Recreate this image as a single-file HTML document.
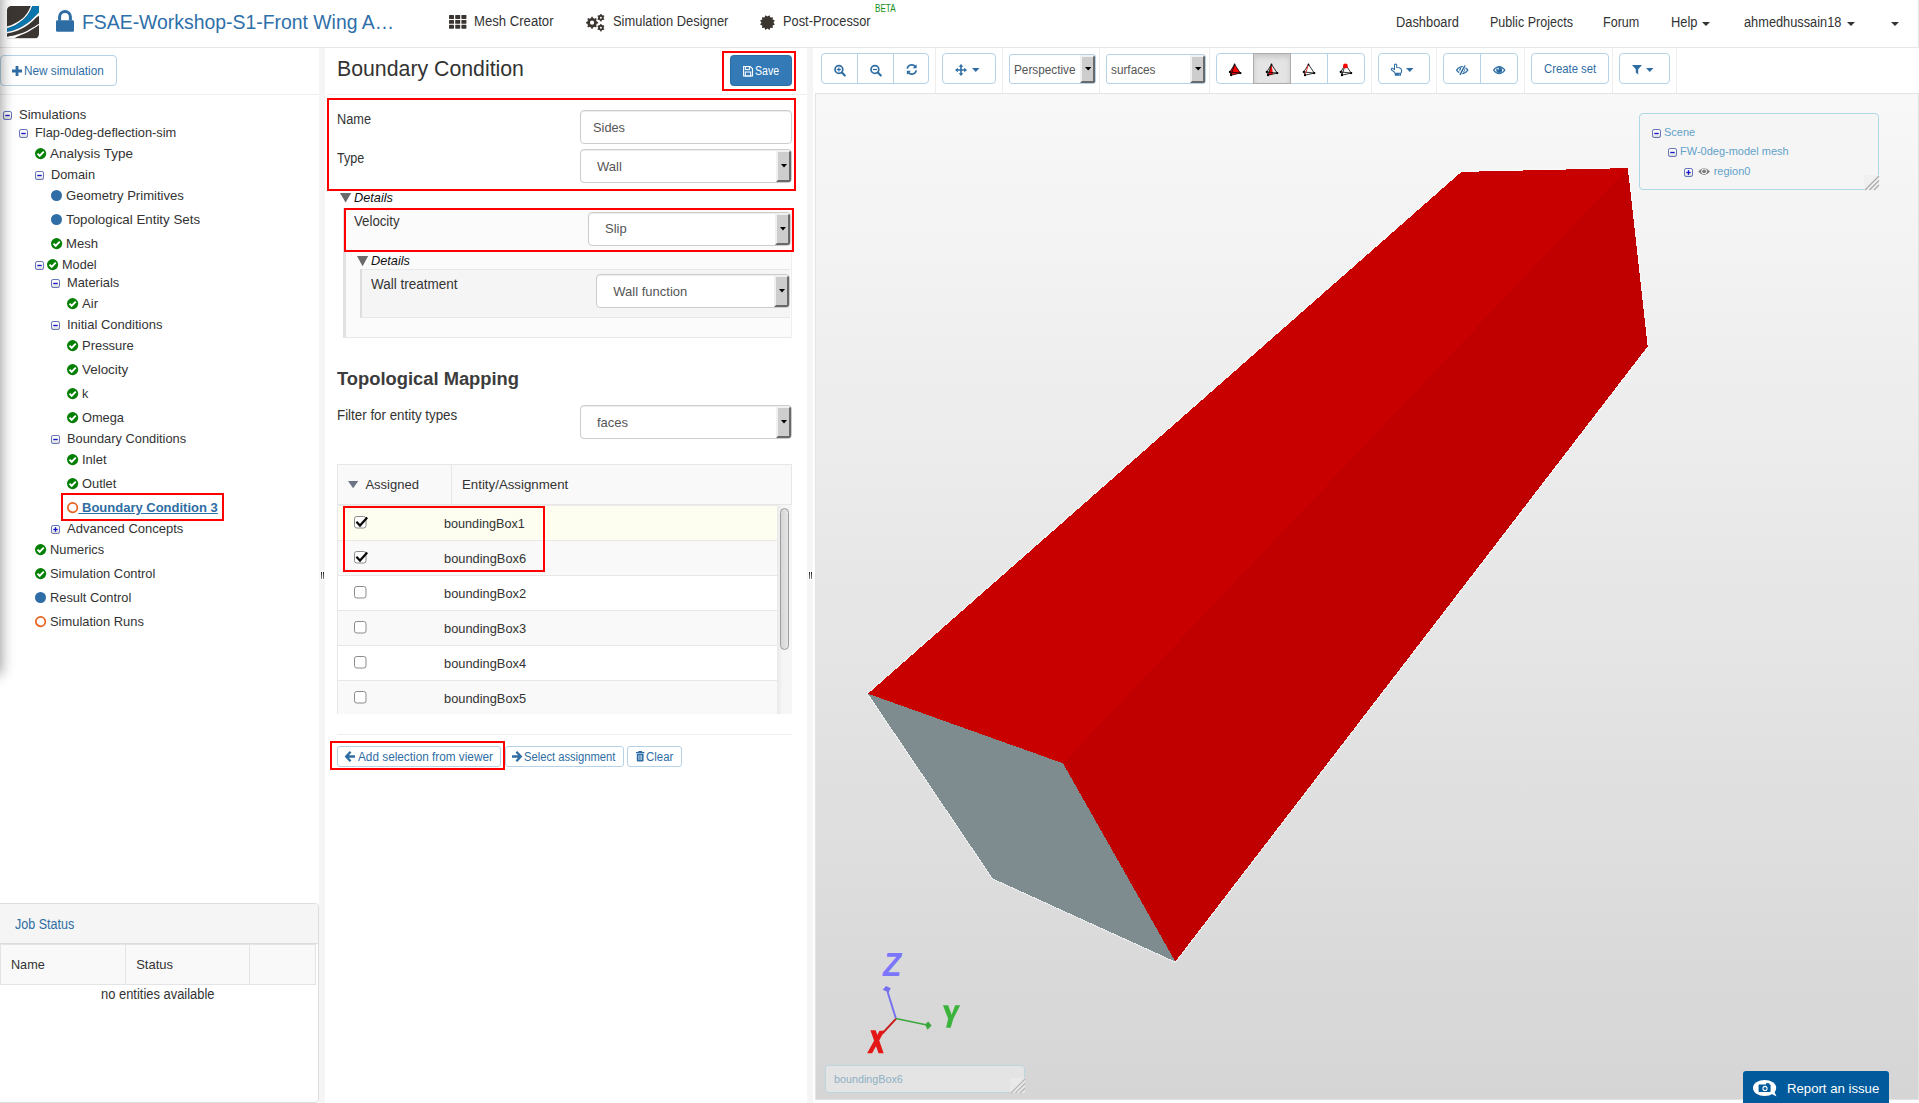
<!DOCTYPE html>
<html><head><meta charset="utf-8"><title>SimScale</title>
<style>
html,body{margin:0;padding:0;width:1919px;height:1103px;overflow:hidden;background:#fff;font-family:"Liberation Sans",sans-serif;}
.t{position:absolute;white-space:pre;transform-origin:0 50%;}
.a{position:absolute;box-sizing:border-box;}
svg{position:absolute;overflow:visible;}
</style></head><body>
<div class="a" style="left:0;top:0;width:1919px;height:48px;background:#fff;border-bottom:1px solid #e7e7e7;border-right:1px solid #e7e7e7;"></div>
<svg style="left:7px;top:5.7px" width="32" height="32.4" viewBox="0 0 32 32.4">
<defs><clipPath id="lg"><path d="M4.2,0 H32 V28.2 A4.2,4.2 0 0 1 27.8,32.4 H0 V4.2 A4.2,4.2 0 0 1 4.2,0 Z"/></clipPath></defs>
<g clip-path="url(#lg)">
<rect x="0" y="0" width="32" height="32.4" fill="#3b3632"/>
<path d="M0,20.3 C0.77,20.07 3.02,19.52 4.6,18.9 C6.18,18.28 7.87,17.53 9.5,16.6 C11.13,15.67 13.05,14.33 14.4,13.3 C15.75,12.27 16.52,11.60 17.6,10.4 C18.68,9.20 19.87,7.83 20.9,6.1 C21.93,4.37 23.32,1.02 23.8,0  L25.3,0 C25.00,0.70 24.23,2.80 23.5,4.2 C22.77,5.60 21.88,7.05 20.9,8.4 C19.92,9.75 18.68,11.18 17.6,12.3 C16.52,13.42 15.75,14.08 14.4,15.1 C13.05,16.12 11.13,17.45 9.5,18.4 C7.87,19.35 6.18,20.15 4.6,20.8 C3.02,21.45 0.77,22.05 0,22.3 Z" fill="#fff"/>
<path d="M0,22.3 C0.77,22.05 3.02,21.45 4.6,20.8 C6.18,20.15 7.87,19.35 9.5,18.4 C11.13,17.45 13.05,16.12 14.4,15.1 C15.75,14.08 16.52,13.42 17.6,12.3 C18.68,11.18 19.92,9.75 20.9,8.4 C21.88,7.05 22.77,5.60 23.5,4.2 C24.23,2.80 25.00,0.70 25.3,0 L32.1,0 L32.1,6.3 C31.58,6.85 30.32,8.27 29,9.6 C27.68,10.93 25.82,12.90 24.2,14.3 C22.58,15.70 20.93,16.88 19.3,18 C17.67,19.12 16.03,20.12 14.4,21 C12.77,21.88 11.13,22.65 9.5,23.3 C7.87,23.95 6.18,24.47 4.6,24.9 C3.02,25.33 0.77,25.73 0,25.9 Z" fill="#0b76ae"/>
<path d="M0,25.9 C0.77,25.73 3.02,25.33 4.6,24.9 C6.18,24.47 7.87,23.95 9.5,23.3 C11.13,22.65 12.77,21.88 14.4,21 C16.03,20.12 17.67,19.12 19.3,18 C20.93,16.88 22.58,15.70 24.2,14.3 C25.82,12.90 27.68,10.93 29,9.6 C30.32,8.27 31.58,6.85 32.1,6.3  L32.1,9.6 C31.58,9.95 30.32,10.58 29,11.7 C27.68,12.82 25.82,14.92 24.2,16.3 C22.58,17.68 20.93,18.92 19.3,20 C17.67,21.08 16.03,21.98 14.4,22.8 C12.77,23.62 11.13,24.30 9.5,24.9 C7.87,25.50 6.18,25.98 4.6,26.4 C3.02,26.82 0.77,27.23 0,27.4 Z" fill="#fff"/>
<path d="M0,30.8 C1.30,30.55 5.40,29.88 7.8,29.3 C10.20,28.72 12.22,28.12 14.4,27.3 C16.58,26.48 19.00,25.35 20.9,24.4 C22.80,23.45 23.93,22.73 25.8,21.6 C27.67,20.47 31.05,18.27 32.1,17.6 L32.1,18.9 C31.05,19.60 27.67,21.93 25.8,23.1 C23.93,24.27 22.80,24.95 20.9,25.9 C19.00,26.85 16.30,27.97 14.4,28.8 C12.50,29.63 10.75,30.30 9.5,30.9 C8.25,31.50 7.33,32.15 6.9,32.4 L0,32.4 Z" fill="#fff"/>
</g></svg>
<svg style="left:56px;top:10px" width="18" height="22" viewBox="0 0 18 22">
<path d="M3.6,10.5 V7 A5.4,5.4 0 0 1 14.4,7 V10.5" fill="none" stroke="#2e6ca4" stroke-width="3"/>
<rect x="0" y="10.2" width="18" height="11.6" rx="1.3" fill="#2e6ca4"/></svg>
<span class="t" style="left:81.80px;top:9px;font-size:20.8px;line-height:25px;color:#2e6fa9;transform:scaleX(0.9324);">FSAE-Workshop-S1-Front Wing A…</span>
<svg style="left:449px;top:15.3px" width="18" height="14" viewBox="0 0 18 14"><rect x="0.0" y="0.0" width="5" height="3.9" rx="0.6" fill="#3a3530"/><rect x="6.2" y="0.0" width="5" height="3.9" rx="0.6" fill="#3a3530"/><rect x="12.4" y="0.0" width="5" height="3.9" rx="0.6" fill="#3a3530"/><rect x="0.0" y="4.9" width="5" height="3.9" rx="0.6" fill="#3a3530"/><rect x="6.2" y="4.9" width="5" height="3.9" rx="0.6" fill="#3a3530"/><rect x="12.4" y="4.9" width="5" height="3.9" rx="0.6" fill="#3a3530"/><rect x="0.0" y="9.8" width="5" height="3.9" rx="0.6" fill="#3a3530"/><rect x="6.2" y="9.8" width="5" height="3.9" rx="0.6" fill="#3a3530"/><rect x="12.4" y="9.8" width="5" height="3.9" rx="0.6" fill="#3a3530"/></svg>
<svg style="left:0;top:0" width="1919" height="48"><path d="M591.17,17.88 L591.33,16.64 L592.77,16.64 L592.93,17.88 L594.84,18.67 L595.83,17.91 L596.84,18.92 L596.08,19.91 L596.87,21.82 L598.11,21.98 L598.11,23.42 L596.87,23.58 L596.08,25.49 L596.84,26.48 L595.83,27.49 L594.84,26.73 L592.93,27.52 L592.77,28.76 L591.33,28.76 L591.17,27.52 L589.26,26.73 L588.27,27.49 L587.26,26.48 L588.02,25.49 L587.23,23.58 L585.99,23.42 L585.99,21.98 L587.23,21.82 L588.02,19.91 L587.26,18.92 L588.27,17.91 L589.26,18.67 Z M589.95,22.70 A2.1,2.1 0 1 0 594.15,22.70 A2.1,2.1 0 1 0 589.95,22.70 Z" fill="#3a352f" fill-rule="evenodd"/><path d="M600.20,14.79 L600.31,13.90 L601.49,13.90 L601.60,14.79 L603.03,15.61 L603.85,15.26 L604.45,16.29 L603.73,16.83 L603.73,18.47 L604.45,19.01 L603.85,20.04 L603.03,19.69 L601.60,20.51 L601.49,21.40 L600.31,21.40 L600.20,20.51 L598.77,19.69 L597.95,20.04 L597.35,19.01 L598.07,18.47 L598.07,16.83 L597.35,16.29 L597.95,15.26 L598.77,15.61 Z M599.90,17.65 A1.0,1.0 0 1 0 601.90,17.65 A1.0,1.0 0 1 0 599.90,17.65 Z" fill="#3a352f" fill-rule="evenodd"/><path d="M600.20,24.79 L600.31,23.90 L601.49,23.90 L601.60,24.79 L603.03,25.61 L603.85,25.26 L604.45,26.29 L603.73,26.83 L603.73,28.47 L604.45,29.01 L603.85,30.04 L603.03,29.69 L601.60,30.51 L601.49,31.40 L600.31,31.40 L600.20,30.51 L598.77,29.69 L597.95,30.04 L597.35,29.01 L598.07,28.47 L598.07,26.83 L597.35,26.29 L597.95,25.26 L598.77,25.61 Z M599.90,27.65 A1.0,1.0 0 1 0 601.90,27.65 A1.0,1.0 0 1 0 599.90,27.65 Z" fill="#3a352f" fill-rule="evenodd"/></svg>
<svg style="left:0;top:0" width="1919" height="48"><polygon points="769.44,15.16 770.45,17.40 772.89,17.16 772.65,19.60 774.89,20.61 773.45,22.60 774.89,24.59 772.65,25.60 772.89,28.04 770.45,27.80 769.44,30.04 767.45,28.60 765.46,30.04 764.45,27.80 762.01,28.04 762.25,25.60 760.01,24.59 761.45,22.60 760.01,20.61 762.25,19.60 762.01,17.16 764.45,17.40 765.46,15.16 767.45,16.60" fill="#3a352f"/></svg>
<span class="t" style="left:474.30px;top:13px;font-size:14px;line-height:17px;color:#333;transform:scaleX(0.9374);">Mesh Creator</span>
<span class="t" style="left:612.60px;top:13px;font-size:14px;line-height:17px;color:#333;transform:scaleX(0.9211);">Simulation Designer</span>
<span class="t" style="left:783.20px;top:13px;font-size:14px;line-height:17px;color:#333;transform:scaleX(0.9153);">Post-Processor</span>
<span class="t" style="left:875.30px;top:3px;font-size:10.4px;line-height:12px;color:#159018;transform:scaleX(0.7842);">BETA</span>
<span class="t" style="left:1396.30px;top:14px;font-size:14px;line-height:17px;color:#333;transform:scaleX(0.9184);">Dashboard</span>
<span class="t" style="left:1489.50px;top:14px;font-size:14px;line-height:17px;color:#333;transform:scaleX(0.8964);">Public Projects</span>
<span class="t" style="left:1603.30px;top:14px;font-size:14px;line-height:17px;color:#333;transform:scaleX(0.8975);">Forum</span>
<span class="t" style="left:1670.50px;top:14px;font-size:14px;line-height:17px;color:#333;transform:scaleX(0.9202);">Help</span>
<span class="t" style="left:1744.00px;top:14px;font-size:14px;line-height:17px;color:#333;transform:scaleX(0.9134);">ahmedhussain18</span>
<svg style="left:1702px;top:21.6px" width="8" height="4" viewBox="0 0 8 4"><path d="M0,0 H8 L4.0,4 Z" fill="#333"/></svg>
<svg style="left:1847px;top:21.6px" width="8" height="4" viewBox="0 0 8 4"><path d="M0,0 H8 L4.0,4 Z" fill="#333"/></svg>
<svg style="left:1891px;top:21.6px" width="8" height="4" viewBox="0 0 8 4"><path d="M0,0 H8 L4.0,4 Z" fill="#333"/></svg>
<div class="a" style="left:319px;top:48px;width:6px;height:1055px;background:#f5f5f5;"></div>
<div class="a" style="left:807px;top:48px;width:6px;height:1055px;background:#f5f5f5;"></div>
<div class="a" style="left:320px;top:571px;width:5px;height:9px;background:#fcfcfc;"></div>
<div class="a" style="left:321px;top:572px;width:1px;height:7px;background:linear-gradient(180deg,#1c1c1c,#555 50%,#8a8a8a);"></div>
<div class="a" style="left:323px;top:572px;width:1px;height:7px;background:linear-gradient(180deg,#1c1c1c,#555 50%,#8a8a8a);"></div>
<div class="a" style="left:808px;top:571px;width:5px;height:9px;background:#fcfcfc;"></div>
<div class="a" style="left:809px;top:572px;width:1px;height:7px;background:linear-gradient(180deg,#1c1c1c,#555 50%,#8a8a8a);"></div>
<div class="a" style="left:811px;top:572px;width:1px;height:7px;background:linear-gradient(180deg,#1c1c1c,#555 50%,#8a8a8a);"></div>
<div class="a" style="left:0px;top:55px;width:117px;height:31px;border:1px solid #b5d2e6;border-radius:4px;background:#fff;"></div>
<svg style="left:12px;top:66.2px" width="10" height="10" viewBox="0 0 10 10"><path d="M3.6,0 H6.4 V3.6 H10 V6.4 H6.4 V10 H3.6 V6.4 H0 V3.6 H3.6 Z" fill="#2e6da4"/></svg>
<span class="t" style="left:23.60px;top:64px;font-size:12px;line-height:14px;color:#2e6da4;transform:scaleX(0.9808);">New simulation</span>
<div class="a" style="left:0;top:94px;width:319px;height:1px;background:#eee;"></div>
<svg style="left:3px;top:111px" width="9" height="9" viewBox="0 0 9 9"><defs><linearGradient id="tg3_111" x1="0" y1="0" x2="0" y2="1"><stop offset="0" stop-color="#fff"/><stop offset="0.5" stop-color="#f4f4f4"/><stop offset="1" stop-color="#d8d8d8"/></linearGradient></defs><rect x="0.5" y="0.5" width="8" height="8" rx="1.6" fill="url(#tg3_111)" stroke="#6474b8" stroke-width="1"/><path d="M2.3,4.5 H6.7" stroke="#1515c8" stroke-width="1.3"/></svg>
<span class="t" style="left:19.00px;top:107px;font-size:13px;line-height:16px;color:#333;">Simulations</span>
<svg style="left:19px;top:129px" width="9" height="9" viewBox="0 0 9 9"><defs><linearGradient id="tg19_129" x1="0" y1="0" x2="0" y2="1"><stop offset="0" stop-color="#fff"/><stop offset="0.5" stop-color="#f4f4f4"/><stop offset="1" stop-color="#d8d8d8"/></linearGradient></defs><rect x="0.5" y="0.5" width="8" height="8" rx="1.6" fill="url(#tg19_129)" stroke="#6474b8" stroke-width="1"/><path d="M2.3,4.5 H6.7" stroke="#1515c8" stroke-width="1.3"/></svg>
<span class="t" style="left:35.00px;top:125px;font-size:13px;line-height:16px;color:#333;transform:scaleX(0.9877);">Flap-0deg-deflection-sim</span>
<svg style="left:34.9px;top:147.9px" width="11.2" height="11.2" viewBox="0 0 11.2 11.2"><circle cx="5.6" cy="5.6" r="5.6" fill="#058005"/><path d="M2.5,5.6 L4.7,7.8 L8.8,3.7" fill="none" stroke="#fff" stroke-width="1.9"/></svg>
<span class="t" style="left:50.00px;top:146px;font-size:13px;line-height:16px;color:#333;transform:scaleX(1.0367);">Analysis Type</span>
<svg style="left:35px;top:171px" width="9" height="9" viewBox="0 0 9 9"><defs><linearGradient id="tg35_171" x1="0" y1="0" x2="0" y2="1"><stop offset="0" stop-color="#fff"/><stop offset="0.5" stop-color="#f4f4f4"/><stop offset="1" stop-color="#d8d8d8"/></linearGradient></defs><rect x="0.5" y="0.5" width="8" height="8" rx="1.6" fill="url(#tg35_171)" stroke="#6474b8" stroke-width="1"/><path d="M2.3,4.5 H6.7" stroke="#1515c8" stroke-width="1.3"/></svg>
<span class="t" style="left:51.00px;top:167px;font-size:13px;line-height:16px;color:#333;transform:scaleX(0.9822);">Domain</span>
<div class="a" style="left:50.9px;top:189.9px;width:11.2px;height:11.2px;border-radius:50%;background:#2f6da6;"></div>
<span class="t" style="left:66.00px;top:188px;font-size:13px;line-height:16px;color:#333;transform:scaleX(1.0075);">Geometry Primitives</span>
<div class="a" style="left:50.9px;top:213.9px;width:11.2px;height:11.2px;border-radius:50%;background:#2f6da6;"></div>
<span class="t" style="left:66.00px;top:212px;font-size:13px;line-height:16px;color:#333;transform:scaleX(1.0253);">Topological Entity Sets</span>
<svg style="left:50.9px;top:237.9px" width="11.2" height="11.2" viewBox="0 0 11.2 11.2"><circle cx="5.6" cy="5.6" r="5.6" fill="#058005"/><path d="M2.5,5.6 L4.7,7.8 L8.8,3.7" fill="none" stroke="#fff" stroke-width="1.9"/></svg>
<span class="t" style="left:66.00px;top:236px;font-size:13px;line-height:16px;color:#333;transform:scaleX(1.0068);">Mesh</span>
<svg style="left:35px;top:261px" width="9" height="9" viewBox="0 0 9 9"><defs><linearGradient id="tg35_261" x1="0" y1="0" x2="0" y2="1"><stop offset="0" stop-color="#fff"/><stop offset="0.5" stop-color="#f4f4f4"/><stop offset="1" stop-color="#d8d8d8"/></linearGradient></defs><rect x="0.5" y="0.5" width="8" height="8" rx="1.6" fill="url(#tg35_261)" stroke="#6474b8" stroke-width="1"/><path d="M2.3,4.5 H6.7" stroke="#1515c8" stroke-width="1.3"/></svg>
<svg style="left:46.9px;top:258.9px" width="11.2" height="11.2" viewBox="0 0 11.2 11.2"><circle cx="5.6" cy="5.6" r="5.6" fill="#058005"/><path d="M2.5,5.6 L4.7,7.8 L8.8,3.7" fill="none" stroke="#fff" stroke-width="1.9"/></svg>
<span class="t" style="left:62.00px;top:257px;font-size:13px;line-height:16px;color:#333;transform:scaleX(0.9771);">Model</span>
<svg style="left:51px;top:279px" width="9" height="9" viewBox="0 0 9 9"><defs><linearGradient id="tg51_279" x1="0" y1="0" x2="0" y2="1"><stop offset="0" stop-color="#fff"/><stop offset="0.5" stop-color="#f4f4f4"/><stop offset="1" stop-color="#d8d8d8"/></linearGradient></defs><rect x="0.5" y="0.5" width="8" height="8" rx="1.6" fill="url(#tg51_279)" stroke="#6474b8" stroke-width="1"/><path d="M2.3,4.5 H6.7" stroke="#1515c8" stroke-width="1.3"/></svg>
<span class="t" style="left:67.00px;top:275px;font-size:13px;line-height:16px;color:#333;transform:scaleX(0.9897);">Materials</span>
<svg style="left:66.9px;top:297.9px" width="11.2" height="11.2" viewBox="0 0 11.2 11.2"><circle cx="5.6" cy="5.6" r="5.6" fill="#058005"/><path d="M2.5,5.6 L4.7,7.8 L8.8,3.7" fill="none" stroke="#fff" stroke-width="1.9"/></svg>
<span class="t" style="left:82.00px;top:296px;font-size:13px;line-height:16px;color:#333;transform:scaleX(1.0072);">Air</span>
<svg style="left:51px;top:321px" width="9" height="9" viewBox="0 0 9 9"><defs><linearGradient id="tg51_321" x1="0" y1="0" x2="0" y2="1"><stop offset="0" stop-color="#fff"/><stop offset="0.5" stop-color="#f4f4f4"/><stop offset="1" stop-color="#d8d8d8"/></linearGradient></defs><rect x="0.5" y="0.5" width="8" height="8" rx="1.6" fill="url(#tg51_321)" stroke="#6474b8" stroke-width="1"/><path d="M2.3,4.5 H6.7" stroke="#1515c8" stroke-width="1.3"/></svg>
<span class="t" style="left:67.00px;top:317px;font-size:13px;line-height:16px;color:#333;">Initial Conditions</span>
<svg style="left:66.9px;top:339.9px" width="11.2" height="11.2" viewBox="0 0 11.2 11.2"><circle cx="5.6" cy="5.6" r="5.6" fill="#058005"/><path d="M2.5,5.6 L4.7,7.8 L8.8,3.7" fill="none" stroke="#fff" stroke-width="1.9"/></svg>
<span class="t" style="left:82.00px;top:338px;font-size:13px;line-height:16px;color:#333;transform:scaleX(0.9957);">Pressure</span>
<svg style="left:66.9px;top:363.9px" width="11.2" height="11.2" viewBox="0 0 11.2 11.2"><circle cx="5.6" cy="5.6" r="5.6" fill="#058005"/><path d="M2.5,5.6 L4.7,7.8 L8.8,3.7" fill="none" stroke="#fff" stroke-width="1.9"/></svg>
<span class="t" style="left:82.00px;top:362px;font-size:13px;line-height:16px;color:#333;transform:scaleX(1.0313);">Velocity</span>
<svg style="left:66.9px;top:387.9px" width="11.2" height="11.2" viewBox="0 0 11.2 11.2"><circle cx="5.6" cy="5.6" r="5.6" fill="#058005"/><path d="M2.5,5.6 L4.7,7.8 L8.8,3.7" fill="none" stroke="#fff" stroke-width="1.9"/></svg>
<span class="t" style="left:82.00px;top:386px;font-size:13px;line-height:16px;color:#333;transform:scaleX(0.9654);">k</span>
<svg style="left:66.9px;top:411.9px" width="11.2" height="11.2" viewBox="0 0 11.2 11.2"><circle cx="5.6" cy="5.6" r="5.6" fill="#058005"/><path d="M2.5,5.6 L4.7,7.8 L8.8,3.7" fill="none" stroke="#fff" stroke-width="1.9"/></svg>
<span class="t" style="left:82.00px;top:410px;font-size:13px;line-height:16px;color:#333;transform:scaleX(0.9826);">Omega</span>
<svg style="left:51px;top:435px" width="9" height="9" viewBox="0 0 9 9"><defs><linearGradient id="tg51_435" x1="0" y1="0" x2="0" y2="1"><stop offset="0" stop-color="#fff"/><stop offset="0.5" stop-color="#f4f4f4"/><stop offset="1" stop-color="#d8d8d8"/></linearGradient></defs><rect x="0.5" y="0.5" width="8" height="8" rx="1.6" fill="url(#tg51_435)" stroke="#6474b8" stroke-width="1"/><path d="M2.3,4.5 H6.7" stroke="#1515c8" stroke-width="1.3"/></svg>
<span class="t" style="left:67.00px;top:431px;font-size:13px;line-height:16px;color:#333;transform:scaleX(0.9868);">Boundary Conditions</span>
<svg style="left:66.9px;top:453.9px" width="11.2" height="11.2" viewBox="0 0 11.2 11.2"><circle cx="5.6" cy="5.6" r="5.6" fill="#058005"/><path d="M2.5,5.6 L4.7,7.8 L8.8,3.7" fill="none" stroke="#fff" stroke-width="1.9"/></svg>
<span class="t" style="left:82.00px;top:452px;font-size:13px;line-height:16px;color:#333;">Inlet</span>
<svg style="left:66.9px;top:477.9px" width="11.2" height="11.2" viewBox="0 0 11.2 11.2"><circle cx="5.6" cy="5.6" r="5.6" fill="#058005"/><path d="M2.5,5.6 L4.7,7.8 L8.8,3.7" fill="none" stroke="#fff" stroke-width="1.9"/></svg>
<span class="t" style="left:82.00px;top:476px;font-size:13px;line-height:16px;color:#333;transform:scaleX(0.9889);">Outlet</span>
<svg style="left:66.9px;top:501.9px" width="11.2" height="11.2" viewBox="0 0 11.2 11.2"><circle cx="5.6" cy="5.6" r="4.75" fill="#fff" stroke="#e8601c" stroke-width="1.7"/></svg>
<span class="t" style="left:78.40px;top:500px;font-size:13px;line-height:16px;color:#2e6da4;font-weight:700;text-decoration:underline;"> Boundary Condition 3</span>
<svg style="left:51px;top:525px" width="9" height="9" viewBox="0 0 9 9"><defs><linearGradient id="tg51_525" x1="0" y1="0" x2="0" y2="1"><stop offset="0" stop-color="#fff"/><stop offset="0.5" stop-color="#f4f4f4"/><stop offset="1" stop-color="#d8d8d8"/></linearGradient></defs><rect x="0.5" y="0.5" width="8" height="8" rx="1.6" fill="url(#tg51_525)" stroke="#6474b8" stroke-width="1"/><path d="M2.3,4.5 H6.7" stroke="#1515c8" stroke-width="1.3"/><path d="M4.5,2.2 V6.8" stroke="#1515c8" stroke-width="1.3"/></svg>
<span class="t" style="left:67.00px;top:521px;font-size:13px;line-height:16px;color:#333;">Advanced Concepts</span>
<svg style="left:34.9px;top:543.9px" width="11.2" height="11.2" viewBox="0 0 11.2 11.2"><circle cx="5.6" cy="5.6" r="5.6" fill="#058005"/><path d="M2.5,5.6 L4.7,7.8 L8.8,3.7" fill="none" stroke="#fff" stroke-width="1.9"/></svg>
<span class="t" style="left:50.00px;top:542px;font-size:13px;line-height:16px;color:#333;transform:scaleX(0.9854);">Numerics</span>
<svg style="left:34.9px;top:567.9px" width="11.2" height="11.2" viewBox="0 0 11.2 11.2"><circle cx="5.6" cy="5.6" r="5.6" fill="#058005"/><path d="M2.5,5.6 L4.7,7.8 L8.8,3.7" fill="none" stroke="#fff" stroke-width="1.9"/></svg>
<span class="t" style="left:50.00px;top:566px;font-size:13px;line-height:16px;color:#333;transform:scaleX(0.9924);">Simulation Control</span>
<div class="a" style="left:34.9px;top:591.9px;width:11.2px;height:11.2px;border-radius:50%;background:#2f6da6;"></div>
<span class="t" style="left:50.00px;top:590px;font-size:13px;line-height:16px;color:#333;transform:scaleX(0.9870);">Result Control</span>
<svg style="left:34.9px;top:615.9px" width="11.2" height="11.2" viewBox="0 0 11.2 11.2"><circle cx="5.6" cy="5.6" r="4.75" fill="#fff" stroke="#e8601c" stroke-width="1.7"/></svg>
<span class="t" style="left:50.00px;top:614px;font-size:13px;line-height:16px;color:#333;transform:scaleX(0.9920);">Simulation Runs</span>
<div class="a" style="left:61px;top:493px;width:163px;height:28px;border:2px solid #f00;"></div>
<div class="a" style="left:-40px;top:-40px;width:40px;height:713px;box-shadow:0 0 14px 1px rgba(0,0,0,0.42);z-index:50;"></div>
<div class="a" style="left:-4px;top:903px;width:323px;height:200px;border:1px solid #ddd;border-radius:4px;background:#fff;"></div>
<div class="a" style="left:-3px;top:904px;width:321px;height:40px;background:#f5f5f5;border-bottom:1px solid #ddd;border-radius:3px 3px 0 0;"></div>
<span class="t" style="left:15.40px;top:916px;font-size:14px;line-height:17px;color:#2e6da4;transform:scaleX(0.8949);">Job Status</span>
<div class="a" style="left:0;top:944px;width:316px;height:41px;background:#f9f9f9;border:1px solid #e4e4e4;"></div>
<div class="a" style="left:125px;top:944px;width:1px;height:41px;background:#e4e4e4;"></div>
<div class="a" style="left:249px;top:944px;width:1px;height:41px;background:#e4e4e4;"></div>
<span class="t" style="left:11.30px;top:957px;font-size:13px;line-height:16px;color:#333;transform:scaleX(0.9716);">Name</span>
<span class="t" style="left:136.20px;top:957px;font-size:13px;line-height:16px;color:#333;">Status</span>
<span class="t" style="left:101.20px;top:986px;font-size:14px;line-height:17px;color:#333;transform:scaleX(0.9229);">no entities available</span>
<span class="t" style="left:337.20px;top:56px;font-size:21.6px;line-height:26px;color:#333;transform:scaleX(0.9856);">Boundary Condition</span>
<div class="a" style="left:722px;top:51px;width:74px;height:40px;border:2px solid #f00;z-index:5;"></div>
<div class="a" style="left:730px;top:55px;width:62px;height:31px;background:#337ab7;border:1px solid #2e6da4;border-radius:3.5px;"></div>
<svg style="left:743px;top:65.5px" width="10" height="10.5" viewBox="0 0 10 10.5"><path d="M0.6,0.5 H7.2 L9.5,2.8 V10 H0.6 Z" fill="none" stroke="#fff" stroke-width="1.1"/><rect x="2.4" y="0.6" width="4" height="3" fill="none" stroke="#fff" stroke-width="1"/><rect x="2.3" y="6" width="5.4" height="4" fill="none" stroke="#fff" stroke-width="1"/></svg>
<span class="t" style="left:755.20px;top:64px;font-size:12px;line-height:14px;color:#fff;transform:scaleX(0.8812);">Save</span>
<div class="a" style="left:327px;top:94px;width:480px;height:1px;background:#eee;"></div>
<div class="a" style="left:327px;top:98px;width:469px;height:93px;border:2px solid #f00;z-index:5;"></div>
<span class="t" style="left:337.20px;top:111px;font-size:14px;line-height:17px;color:#333;transform:scaleX(0.9103);">Name</span>
<div class="a" style="left:580px;top:110px;width:212px;height:34px;border:1px solid #ccc;border-radius:4px;background:#fff;box-shadow:inset 0 1px 1px rgba(0,0,0,.075);"></div>
<span class="t" style="left:593.30px;top:120px;font-size:13px;line-height:16px;color:#555;transform:scaleX(0.9842);">Sides</span>
<span class="t" style="left:337.20px;top:150px;font-size:14px;line-height:17px;color:#333;transform:scaleX(0.8962);">Type</span>
<div class="a" style="left:580px;top:149px;width:212px;height:34px;border:1px solid #ccc;border-radius:4px;background:#fff;box-shadow:inset 0 1px 1px rgba(0,0,0,.075);overflow:hidden;"><div class="a" style="right:0;top:0;width:15px;height:32px;background:#cdcdcd;border-style:solid;border-width:2px;border-color:#f0f0f0 #696969 #696969 #f0f0f0;"></div></div><svg style="left:781.3px;top:164.1px" width="6" height="3.6" viewBox="0 0 6 3.6"><path d="M0,0 H6 L3,3.6 Z" fill="#000"/></svg><span class="t" style="left:597.00px;top:159px;font-size:13px;line-height:16px;color:#555;">Wall</span>
<svg style="left:339.8px;top:193.2px" width="11.2" height="9.6" viewBox="0 0 11.2 9.6"><path d="M0,0 H11.2 L5.6,9.6 Z" fill="#6a6a6a"/></svg>
<span class="t" style="left:354.00px;top:190px;font-size:13px;line-height:16px;color:#111;font-style:italic;transform:scaleX(0.9814);">Details</span>
<div class="a" style="left:343px;top:208px;width:449px;height:130px;background:#fbfbfb;border-left:3px solid #e2e2e2;border-bottom:1px solid #e8e8e8;border-right:1px solid #eee;"></div>
<div class="a" style="left:344px;top:208px;width:450px;height:44px;border:2px solid #f00;z-index:5;"></div>
<span class="t" style="left:353.90px;top:213px;font-size:14px;line-height:17px;color:#333;transform:scaleX(0.9452);">Velocity</span>
<div class="a" style="left:588px;top:212px;width:203px;height:34px;border:1px solid #ccc;border-radius:4px;background:#fff;box-shadow:inset 0 1px 1px rgba(0,0,0,.075);overflow:hidden;"><div class="a" style="right:0;top:0;width:15px;height:32px;background:#cdcdcd;border-style:solid;border-width:2px;border-color:#f0f0f0 #696969 #696969 #f0f0f0;"></div></div><svg style="left:780.3px;top:227.1px" width="6" height="3.6" viewBox="0 0 6 3.6"><path d="M0,0 H6 L3,3.6 Z" fill="#000"/></svg><span class="t" style="left:605.00px;top:221px;font-size:13px;line-height:16px;color:#555;">Slip</span>
<svg style="left:356.8px;top:256px" width="11.2" height="10.2" viewBox="0 0 11.2 10.2"><path d="M0,0 H11.2 L5.6,10.2 Z" fill="#6a6a6a"/></svg>
<span class="t" style="left:371.00px;top:253px;font-size:13px;line-height:16px;color:#111;font-style:italic;transform:scaleX(0.9814);">Details</span>
<div class="a" style="left:360px;top:269px;width:430px;height:49px;background:#f5f5f5;border-left:2px solid #ddd;border-top:1px solid #e8e8e8;border-bottom:1px solid #e8e8e8;"></div>
<span class="t" style="left:371.00px;top:276px;font-size:14px;line-height:17px;color:#333;transform:scaleX(0.9640);">Wall treatment</span>
<div class="a" style="left:596px;top:274px;width:193.5px;height:34px;border:1px solid #ccc;border-radius:4px;background:#fff;box-shadow:inset 0 1px 1px rgba(0,0,0,.075);overflow:hidden;"><div class="a" style="right:0;top:0;width:15px;height:32px;background:#cdcdcd;border-style:solid;border-width:2px;border-color:#f0f0f0 #696969 #696969 #f0f0f0;"></div></div><svg style="left:778.8px;top:289.1px" width="6" height="3.6" viewBox="0 0 6 3.6"><path d="M0,0 H6 L3,3.6 Z" fill="#000"/></svg><span class="t" style="left:613.30px;top:284px;font-size:13px;line-height:16px;color:#555;">Wall function</span>
<span class="t" style="left:336.80px;top:367px;font-size:18.8px;line-height:23px;color:#3c3c3c;font-weight:700;transform:scaleX(0.9765);">Topological Mapping</span>
<span class="t" style="left:337.30px;top:407px;font-size:14px;line-height:17px;color:#333;transform:scaleX(0.9537);">Filter for entity types</span>
<div class="a" style="left:580px;top:405px;width:211.5px;height:33.5px;border:1px solid #ccc;border-radius:4px;background:#fff;box-shadow:inset 0 1px 1px rgba(0,0,0,.075);overflow:hidden;"><div class="a" style="right:0;top:0;width:15px;height:31.5px;background:#cdcdcd;border-style:solid;border-width:2px;border-color:#f0f0f0 #696969 #696969 #f0f0f0;"></div></div><svg style="left:780.8px;top:419.85px" width="6" height="3.6" viewBox="0 0 6 3.6"><path d="M0,0 H6 L3,3.6 Z" fill="#000"/></svg><span class="t" style="left:597.00px;top:415px;font-size:13px;line-height:16px;color:#555;">faces</span>
<div class="a" style="left:337px;top:464px;width:455px;height:41px;background:#f9f9f9;border:1px solid #e7e7e7;"></div>
<div class="a" style="left:451px;top:464px;width:1px;height:41px;background:#e7e7e7;"></div>
<svg style="left:348.1px;top:480.9px" width="10.3" height="7.2" viewBox="0 0 10.3 7.2"><path d="M0,0 H10.3 L5.15,7.2 Z" fill="#6b7486"/></svg>
<span class="t" style="left:365.40px;top:477px;font-size:13px;line-height:16px;color:#333;">Assigned</span>
<span class="t" style="left:462.30px;top:477px;font-size:13px;line-height:16px;color:#333;transform:scaleX(1.0208);">Entity/Assignment</span>
<div class="a" style="left:337px;top:505px;width:455px;height:209px;border-left:1px solid #e7e7e7;border-top:1px solid #ececec;"></div>
<div class="a" style="left:338px;top:506px;width:439px;height:35px;background:#fdfdf0;border-bottom:1px solid #e7e7e7;"></div>
<svg style="left:354.4px;top:516.1px" width="12.5" height="12.5" viewBox="0 0 12.5 12.5"><rect x="0.5" y="0.5" width="11.5" height="11.5" rx="2.3" fill="#fff" stroke="#8a8a8a" stroke-width="1"/><path d="M2.4,5.7 L6.0,9.6 L13.2,1.4" fill="none" stroke="#0a0a0a" stroke-width="2.2"/></svg>
<span class="t" style="left:444.00px;top:516px;font-size:13px;line-height:16px;color:#333;transform:scaleX(0.9719);">boundingBox1</span>
<div class="a" style="left:338px;top:541px;width:439px;height:35px;background:#f9f9f9;border-bottom:1px solid #e7e7e7;"></div>
<svg style="left:354.4px;top:551.1px" width="12.5" height="12.5" viewBox="0 0 12.5 12.5"><rect x="0.5" y="0.5" width="11.5" height="11.5" rx="2.3" fill="#fff" stroke="#8a8a8a" stroke-width="1"/><path d="M2.4,5.7 L6.0,9.6 L13.2,1.4" fill="none" stroke="#0a0a0a" stroke-width="2.2"/></svg>
<span class="t" style="left:444.00px;top:551px;font-size:13px;line-height:16px;color:#333;transform:scaleX(0.9876);">boundingBox6</span>
<div class="a" style="left:338px;top:576px;width:439px;height:35px;background:#fff;border-bottom:1px solid #e7e7e7;"></div>
<svg style="left:354.4px;top:586.1px" width="12.5" height="12.5" viewBox="0 0 12.5 12.5"><rect x="0.5" y="0.5" width="11.5" height="11.5" rx="2.3" fill="#fff" stroke="#8a8a8a" stroke-width="1"/></svg>
<span class="t" style="left:444.00px;top:586px;font-size:13px;line-height:16px;color:#333;transform:scaleX(0.9876);">boundingBox2</span>
<div class="a" style="left:338px;top:611px;width:439px;height:35px;background:#f9f9f9;border-bottom:1px solid #e7e7e7;"></div>
<svg style="left:354.4px;top:621.1px" width="12.5" height="12.5" viewBox="0 0 12.5 12.5"><rect x="0.5" y="0.5" width="11.5" height="11.5" rx="2.3" fill="#fff" stroke="#8a8a8a" stroke-width="1"/></svg>
<span class="t" style="left:444.00px;top:621px;font-size:13px;line-height:16px;color:#333;transform:scaleX(0.9876);">boundingBox3</span>
<div class="a" style="left:338px;top:646px;width:439px;height:35px;background:#fff;border-bottom:1px solid #e7e7e7;"></div>
<svg style="left:354.4px;top:656.1px" width="12.5" height="12.5" viewBox="0 0 12.5 12.5"><rect x="0.5" y="0.5" width="11.5" height="11.5" rx="2.3" fill="#fff" stroke="#8a8a8a" stroke-width="1"/></svg>
<span class="t" style="left:444.00px;top:656px;font-size:13px;line-height:16px;color:#333;transform:scaleX(0.9876);">boundingBox4</span>
<div class="a" style="left:338px;top:681px;width:439px;height:33px;background:#f9f9f9;"></div>
<svg style="left:354.4px;top:691.1px" width="12.5" height="12.5" viewBox="0 0 12.5 12.5"><rect x="0.5" y="0.5" width="11.5" height="11.5" rx="2.3" fill="#fff" stroke="#8a8a8a" stroke-width="1"/></svg>
<span class="t" style="left:444.00px;top:691px;font-size:13px;line-height:16px;color:#333;transform:scaleX(0.9876);">boundingBox5</span>
<div class="a" style="left:777px;top:505px;width:15px;height:209px;background:linear-gradient(90deg,#e9e9e9,#f6f6f6 40%,#f6f6f6);"></div>
<div class="a" style="left:780px;top:508px;width:9px;height:142px;background:linear-gradient(90deg,#d6d6d6,#e6e6e6);border:1px solid #9d9d9d;border-radius:4.5px;"></div>
<div class="a" style="left:343px;top:506px;width:202px;height:66px;border:2px solid #f00;z-index:5;"></div>
<div class="a" style="left:337px;top:734px;width:455px;height:1px;background:#eee;"></div>
<div class="a" style="left:330px;top:741px;width:175px;height:29px;border:2px solid #f00;z-index:5;"></div>
<div class="a" style="left:337px;top:746px;width:163.5px;height:21px;border:1px solid #b5d2e6;border-radius:3px;background:#fff;"></div>
<div class="a" style="left:504.5px;top:746px;width:119.0px;height:21px;border:1px solid #b5d2e6;border-radius:3px;background:#fff;"></div>
<div class="a" style="left:627px;top:746px;width:55px;height:21px;border:1px solid #b5d2e6;border-radius:3px;background:#fff;"></div>
<svg style="left:345.3px;top:751px" width="10" height="11" viewBox="0 0 10 11"><path d="M5.6,0.8 L1.2,5.5 L5.6,10.2 M1.4,5.5 H10" fill="none" stroke="#2e6da4" stroke-width="2.3"/></svg>
<span class="t" style="left:357.70px;top:750px;font-size:12px;line-height:14px;color:#2e6da4;transform:scaleX(0.9819);">Add selection from viewer</span>
<svg style="left:512px;top:751px" width="10" height="11" viewBox="0 0 10 11"><path d="M4.4,0.8 L8.8,5.5 L4.4,10.2 M8.6,5.5 H0" fill="none" stroke="#2e6da4" stroke-width="2.3"/></svg>
<span class="t" style="left:524.40px;top:750px;font-size:12px;line-height:14px;color:#2e6da4;transform:scaleX(0.9322);">Select assignment</span>
<svg style="left:635.8px;top:751px" width="8.4" height="10.5" viewBox="0 0 8.4 10.5"><path d="M0,1.6 H8.4 M2.8,1.4 V0.5 H5.6 V1.4" fill="none" stroke="#2e6da4" stroke-width="1.1"/><path d="M0.8,2.8 H7.6 V9.6 Q7.6,10.5 6.7,10.5 H1.7 Q0.8,10.5 0.8,9.6 Z" fill="#2e6da4"/><path d="M2.8,4 V9 M4.2,4 V9 M5.6,4 V9" stroke="#fff" stroke-width="0.6"/></svg>
<span class="t" style="left:646.40px;top:750px;font-size:12px;line-height:14px;color:#2e6da4;transform:scaleX(0.9519);">Clear</span>
<div class="a" style="left:935px;top:48px;width:1px;height:45px;background:#eee;"></div>
<div class="a" style="left:1002px;top:48px;width:1px;height:45px;background:#eee;"></div>
<div class="a" style="left:1099px;top:48px;width:1px;height:45px;background:#eee;"></div>
<div class="a" style="left:1209px;top:48px;width:1px;height:45px;background:#eee;"></div>
<div class="a" style="left:1371px;top:48px;width:1px;height:45px;background:#eee;"></div>
<div class="a" style="left:1436px;top:48px;width:1px;height:45px;background:#eee;"></div>
<div class="a" style="left:1524px;top:48px;width:1px;height:45px;background:#eee;"></div>
<div class="a" style="left:1612px;top:48px;width:1px;height:45px;background:#eee;"></div>
<div class="a" style="left:1676px;top:48px;width:1px;height:45px;background:#eee;"></div>
<div class="a" style="left:815px;top:93px;width:1104px;height:1007px;border:1px solid #e3e3e3;background:linear-gradient(180deg,#f8f8f8,#d5d5d5);"></div>
<svg style="left:0;top:0" width="1919" height="1103" viewBox="0 0 1919 1103">
<polygon points="867.95,693.7 1461.4,171.9 1627.8,168.1 1647.7,346.4 1175.3,961.6 992.8,878.5" fill="none" stroke="rgba(250,255,255,0.6)" stroke-width="1.8" stroke-linejoin="miter"/>
<g shape-rendering="crispEdges">
<polygon points="867.95,693.7 1062.95,763.3 1175.3,961.6 992.8,878.5" fill="#7e8b8f"/>
<polygon points="867.95,693.7 1461.4,171.9 1627.8,168.1 1632,250 1200,800 1062.95,763.3" fill="#c80000"/>
<polygon points="1062.95,763.3 1627.8,168.1 1647.7,346.4 1175.3,961.6" fill="#c00000"/>
</g>
</svg>
<div class="a" style="left:821px;top:53px;width:108px;height:31px;border:1px solid #b5d2e6;border-radius:4px;background:#fff;"></div>
<div class="a" style="left:857px;top:53px;width:1px;height:31px;background:#b5d2e6;"></div>
<div class="a" style="left:893px;top:53px;width:1px;height:31px;background:#b5d2e6;"></div>
<svg style="left:834px;top:63.6px" width="12" height="12" viewBox="0 0 12 12"><circle cx="4.9" cy="5.5" r="3.9" fill="none" stroke="#2e6da4" stroke-width="1.7"/><path d="M7.9,8.5 L10.8,11.4" stroke="#2e6da4" stroke-width="2.1" stroke-linecap="round"/><path d="M2.8,5.5 H7" stroke="#2e6da4" stroke-width="1.2"/><path d="M4.9,3.4 V7.6" stroke="#2e6da4" stroke-width="1.2"/></svg>
<svg style="left:870px;top:63.6px" width="12" height="12" viewBox="0 0 12 12"><circle cx="4.9" cy="5.5" r="3.9" fill="none" stroke="#2e6da4" stroke-width="1.7"/><path d="M7.9,8.5 L10.8,11.4" stroke="#2e6da4" stroke-width="2.1" stroke-linecap="round"/><path d="M2.8,5.5 H7" stroke="#2e6da4" stroke-width="1.2"/></svg>
<svg style="left:905.5px;top:63.5px" width="11.5" height="11" viewBox="0 0 11.5 11"><path d="M1.2,4.6 A4.6,4.6 0 0 1 9.3,2.6" fill="none" stroke="#2e6da4" stroke-width="1.7"/><path d="M10.6,0.3 V4.3 H6.6 Z" fill="#2e6da4"/><path d="M10.3,6.4 A4.6,4.6 0 0 1 2.2,8.4" fill="none" stroke="#2e6da4" stroke-width="1.7"/><path d="M0.9,10.7 V6.7 H4.9 Z" fill="#2e6da4"/></svg>
<div class="a" style="left:942px;top:53px;width:54px;height:31px;border:1px solid #b5d2e6;border-radius:4px;background:#fff;"></div>
<svg style="left:955px;top:63.5px" width="12" height="12" viewBox="0 0 12 12"><path d="M6,0 L8.3,2.8 H6.8 V5.2 H9.2 V3.7 L12,6 L9.2,8.3 V6.8 H6.8 V9.2 H8.3 L6,12 L3.7,9.2 H5.2 V6.8 H2.8 V8.3 L0,6 L2.8,3.7 V5.2 H5.2 V2.8 H3.7 Z" fill="#2e6da4"/></svg>
<svg style="left:972px;top:68px" width="7.5" height="4" viewBox="0 0 7.5 4"><path d="M0,0 H7.5 L3.75,4 Z" fill="#2e6da4"/></svg>
<div class="a" style="left:1009px;top:54px;width:87px;height:30px;border:1px solid #b5d2e6;border-radius:3px;background:#fff;overflow:hidden;"><div class="a" style="right:0;top:0;width:15px;height:28px;background:#cdcdcd;border-style:solid;border-width:2px;border-color:#f0f0f0 #696969 #696969 #f0f0f0;"></div></div><svg style="left:1085px;top:67px" width="6.4" height="3.6" viewBox="0 0 6 3.4"><path d="M0,0 H6 L3,3.4 Z" fill="#000"/></svg><span class="t" style="left:1014.00px;top:63px;font-size:12px;line-height:14px;color:#555;transform:scaleX(0.9809);">Perspective</span>
<div class="a" style="left:1106px;top:54px;width:99.5px;height:30px;border:1px solid #b5d2e6;border-radius:3px;background:#fff;overflow:hidden;"><div class="a" style="right:0;top:0;width:15px;height:28px;background:#cdcdcd;border-style:solid;border-width:2px;border-color:#f0f0f0 #696969 #696969 #f0f0f0;"></div></div><svg style="left:1194.5px;top:67px" width="6.4" height="3.6" viewBox="0 0 6 3.4"><path d="M0,0 H6 L3,3.4 Z" fill="#000"/></svg><span class="t" style="left:1111.00px;top:63px;font-size:12px;line-height:14px;color:#555;transform:scaleX(0.9813);">surfaces</span>
<div class="a" style="left:1216px;top:53px;width:149px;height:31px;border:1px solid #b5d2e6;border-radius:4px;background:#fff;"></div>
<div class="a" style="left:1327px;top:53px;width:1px;height:31px;background:#b5d2e6;"></div>
<div class="a" style="left:1253px;top:53px;width:38px;height:31px;background:#e4e4e4;border:1px solid #adadad;box-shadow:inset 0 3px 5px rgba(0,0,0,.125);"></div>
<svg style="left:0;top:0" width="1919" height="1103"><polygon points="1234.6,64.4 1229.9,71.9 1231.1,75.2 1240.4,73.1" fill="#f00"/><path d="M1234.6,64.4 L1229.9,71.9" stroke="#000" stroke-width="0.8" fill="none"/><path d="M1234.6,64.4 L1231.1,75.2" stroke="#000" stroke-width="0.8" fill="none"/><path d="M1234.6,64.4 L1240.4,73.1" stroke="#000" stroke-width="0.8" fill="none"/><path d="M1229.9,71.9 L1231.1,75.2" stroke="#000" stroke-width="0.8" fill="none"/><path d="M1231.1,75.2 L1240.4,73.1" stroke="#000" stroke-width="0.8" fill="none"/><path d="M1229.9,71.9 L1240.4,73.1" stroke="#000" stroke-width="0.8" fill="none"/><circle cx="1234.6" cy="64.4" r="0.9" fill="#000"/><circle cx="1229.9" cy="71.9" r="1.1" fill="#000"/><circle cx="1231.1" cy="75.2" r="1.1" fill="#000"/><circle cx="1240.4" cy="73.1" r="1.1" fill="#000"/></svg>
<svg style="left:0;top:0" width="1919" height="1103"><polygon points="1271.5,64.4 1268.0,75.2 1273.0,74.2" fill="#f00"/><path d="M1271.5,64.4 L1266.8,71.9" stroke="#000" stroke-width="0.8" fill="none"/><path d="M1271.5,64.4 L1268.0,75.2" stroke="#000" stroke-width="0.8" fill="none"/><path d="M1271.5,64.4 L1277.3,73.1" stroke="#000" stroke-width="0.8" fill="none"/><path d="M1266.8,71.9 L1268.0,75.2" stroke="#000" stroke-width="0.8" fill="none"/><path d="M1268.0,75.2 L1277.3,73.1" stroke="#000" stroke-width="0.8" fill="none"/><path d="M1266.8,71.9 L1277.3,73.1" stroke="#000" stroke-width="0.8" fill="none"/><circle cx="1271.5" cy="64.4" r="0.9" fill="#000"/><circle cx="1266.8" cy="71.9" r="1.1" fill="#000"/><circle cx="1268.0" cy="75.2" r="1.1" fill="#000"/><circle cx="1277.3" cy="73.1" r="1.1" fill="#000"/></svg>
<svg style="left:0;top:0" width="1919" height="1103"><path d="M1308.5,64.4 L1303.8,71.9" stroke="#000" stroke-width="0.8" fill="none"/><path d="M1308.5,64.4 L1305.0,75.2" stroke="#f00" stroke-width="0.8" fill="none"/><path d="M1308.5,64.4 L1314.3,73.1" stroke="#000" stroke-width="0.8" fill="none"/><path d="M1303.8,71.9 L1305.0,75.2" stroke="#000" stroke-width="0.8" fill="none"/><path d="M1305.0,75.2 L1314.3,73.1" stroke="#000" stroke-width="0.8" fill="none"/><path d="M1303.8,71.9 L1314.3,73.1" stroke="#000" stroke-width="0.8" fill="none"/><circle cx="1308.5" cy="64.4" r="0.9" fill="#000"/><circle cx="1303.8" cy="71.9" r="1.1" fill="#000"/><circle cx="1305.0" cy="75.2" r="1.1" fill="#000"/><circle cx="1314.3" cy="73.1" r="1.1" fill="#000"/></svg>
<svg style="left:0;top:0" width="1919" height="1103"><path d="M1345.4,64.4 L1340.7,71.9" stroke="#000" stroke-width="0.8" fill="none"/><path d="M1345.4,64.4 L1341.9,75.2" stroke="#000" stroke-width="0.8" fill="none"/><path d="M1345.4,64.4 L1351.2,73.1" stroke="#000" stroke-width="0.8" fill="none"/><path d="M1340.7,71.9 L1341.9,75.2" stroke="#000" stroke-width="0.8" fill="none"/><path d="M1341.9,75.2 L1351.2,73.1" stroke="#000" stroke-width="0.8" fill="none"/><path d="M1340.7,71.9 L1351.2,73.1" stroke="#000" stroke-width="0.8" fill="none"/><circle cx="1345.4" cy="66.0" r="2.4" fill="#f00"/><circle cx="1340.7" cy="71.9" r="1.1" fill="#000"/><circle cx="1341.9" cy="75.2" r="1.1" fill="#000"/><circle cx="1351.2" cy="73.1" r="1.1" fill="#000"/></svg>
<div class="a" style="left:1378px;top:53px;width:52px;height:31px;border:1px solid #b5d2e6;border-radius:4px;background:#fff;"></div>
<svg style="left:1384px;top:58px" width="24" height="24" viewBox="0 0 24 24"><path d="M10.5,11.6 V7 Q10.5,6 11.6,6 Q12.7,6 12.7,7 V9.6 L15.4,9.7 Q17.3,10.2 17.6,12 Q17.8,13.8 16.9,15.2 H11 L10.2,13.9 L7.5,12 Q6.9,11.1 7.5,10.5 Q8.3,10 9,10.5 Z" fill="#fff" stroke="#2e6da4" stroke-width="1.05" stroke-linejoin="round"/><rect x="10.8" y="15.2" width="6.2" height="2.6" rx="0.4" fill="#2e6da4"/><circle cx="15.6" cy="16.5" r="0.45" fill="#fff"/></svg>
<svg style="left:1406.3px;top:68px" width="7.5" height="4" viewBox="0 0 7.5 4"><path d="M0,0 H7.5 L3.75,4 Z" fill="#2e6da4"/></svg>
<div class="a" style="left:1443px;top:53px;width:75px;height:31px;border:1px solid #b5d2e6;border-radius:4px;background:#fff;"></div>
<div class="a" style="left:1480px;top:53px;width:1px;height:31px;background:#b5d2e6;"></div>
<svg style="left:1455.8px;top:66.2px" width="12.4" height="8.4" viewBox="0 0 12.4 8.4"><path d="M0.5,4.2 Q6.2,-2.9 11.9,4.2 Q6.2,11.3 0.5,4.2 Z" fill="#fff" stroke="#2e6da4" stroke-width="1.1"/><path d="M5.2,1.4 A2.9,2.9 0 0 0 4.4,6.3 Z" fill="#2e6da4"/><path d="M9.2,-0.4 L3.6,8.9" stroke="#fff" stroke-width="3"/><path d="M9.0,-0.5 L3.9,8.9" stroke="#2e6da4" stroke-width="1.5"/><path d="M8.2,2.6 A2.6,2.6 0 0 1 7.0,6.4" fill="none" stroke="#2e6da4" stroke-width="0.9"/></svg>
<svg style="left:1492.8px;top:66.2px" width="12.4" height="8.4" viewBox="0 0 12.4 8.4"><path d="M0.5,4.2 Q6.2,-2.9 11.9,4.2 Q6.2,11.3 0.5,4.2 Z" fill="#fff" stroke="#2e6da4" stroke-width="1.1"/><circle cx="6.2" cy="3.9" r="3" fill="#2e6da4"/><circle cx="5.1" cy="2.7" r="0.9" fill="#dbe8f3"/></svg>
<div class="a" style="left:1531px;top:53px;width:77.5px;height:31px;border:1px solid #b5d2e6;border-radius:4px;background:#fff;"></div>
<span class="t" style="left:1544.10px;top:62px;font-size:12px;line-height:14px;color:#2e6da4;transform:scaleX(0.9430);">Create set</span>
<div class="a" style="left:1619px;top:53px;width:51px;height:31px;border:1px solid #b5d2e6;border-radius:4px;background:#fff;"></div>
<svg style="left:1632px;top:65.2px" width="10" height="9.6" viewBox="0 0 10 9.6"><path d="M0,0 H10 L6.2,4.2 V9.6 L3.8,7.6 V4.2 Z" fill="#2e6da4"/></svg>
<svg style="left:1646.2px;top:68px" width="7.5" height="4" viewBox="0 0 7.5 4"><path d="M0,0 H7.5 L3.75,4 Z" fill="#2e6da4"/></svg>
<div class="a" style="left:1639px;top:113px;width:240px;height:77px;border:1px solid #add8e6;border-radius:4px;background:rgba(245,245,245,0.85);"></div>
<svg style="left:1652px;top:128.6px" width="9" height="9" viewBox="0 0 9 9"><defs><linearGradient id="tg1652_128.6" x1="0" y1="0" x2="0" y2="1"><stop offset="0" stop-color="#fff"/><stop offset="0.5" stop-color="#f4f4f4"/><stop offset="1" stop-color="#d8d8d8"/></linearGradient></defs><rect x="0.5" y="0.5" width="8" height="8" rx="1.6" fill="url(#tg1652_128.6)" stroke="#6474b8" stroke-width="1"/><path d="M2.3,4.5 H6.7" stroke="#1515c8" stroke-width="1.3"/></svg>
<span class="t" style="left:1664.00px;top:126px;font-size:11px;line-height:13px;color:#62a1c8;">Scene</span>
<svg style="left:1668px;top:147.9px" width="9" height="9" viewBox="0 0 9 9"><defs><linearGradient id="tg1668_147.9" x1="0" y1="0" x2="0" y2="1"><stop offset="0" stop-color="#fff"/><stop offset="0.5" stop-color="#f4f4f4"/><stop offset="1" stop-color="#d8d8d8"/></linearGradient></defs><rect x="0.5" y="0.5" width="8" height="8" rx="1.6" fill="url(#tg1668_147.9)" stroke="#6474b8" stroke-width="1"/><path d="M2.3,4.5 H6.7" stroke="#1515c8" stroke-width="1.3"/></svg>
<span class="t" style="left:1680.00px;top:145px;font-size:11px;line-height:13px;color:#62a1c8;">FW-0deg-model mesh</span>
<svg style="left:1684px;top:167.9px" width="9" height="9" viewBox="0 0 9 9"><defs><linearGradient id="tg1684_167.9" x1="0" y1="0" x2="0" y2="1"><stop offset="0" stop-color="#fff"/><stop offset="0.5" stop-color="#f4f4f4"/><stop offset="1" stop-color="#d8d8d8"/></linearGradient></defs><rect x="0.5" y="0.5" width="8" height="8" rx="1.6" fill="url(#tg1684_167.9)" stroke="#6474b8" stroke-width="1"/><path d="M2.3,4.5 H6.7" stroke="#1515c8" stroke-width="1.3"/><path d="M4.5,2.2 V6.8" stroke="#1515c8" stroke-width="1.3"/></svg>
<svg style="left:1698px;top:167.2px" width="12.2" height="9" viewBox="0 0 12.2 9"><path d="M0.2,4.5 Q6.1,-2.6 12,4.5 Q6.1,11.6 0.2,4.5 Z" fill="#7c7c7c" /><circle cx="6.1" cy="4.3" r="2.9" fill="#f4f4f4"/><circle cx="6.1" cy="4.3" r="1.9" fill="#7c7c7c"/></svg>
<span class="t" style="left:1713.70px;top:165px;font-size:11px;line-height:13px;color:#62a1c8;">region0</span>
<svg style="left:1863.5px;top:174.5px" width="15" height="15" viewBox="0 0 15 15"><rect width="15" height="15" fill="#efefef" opacity="0.9"/><path d="M1,15 L15,1 M5.5,15 L15,5.5 M10,15 L15,10" stroke="#aaa" stroke-width="1.2"/></svg>
<svg style="left:0;top:0" width="1919" height="1103">
<path d="M895.90,1018.54 L887.18,990.44" stroke="#7570ee" stroke-width="1.9"/><polygon points="882.64,989.87 886.04,985.90 890.80,988.17 888.54,992.36" fill="#7570ee"/>
<path d="M895.90,1018.54 L928.20,1025.23" stroke="#3aa83a" stroke-width="1.7"/><polygon points="925.03,1024.44 928.20,1021.38 931.60,1025.57 927.52,1029.77" fill="#3aa83a"/>
<path d="M895.90,1018.88 L882.30,1033.51" stroke="#c81a1a" stroke-width="1.9"/>
<polygon points="942.94,1005.17 948.15,1005.17 951.67,1014.80 955.18,1005.17 960.17,1005.17 953.37,1018.77 950.65,1027.84 946.11,1027.84 948.15,1018.77" fill="#3cb43c"/>
<polygon points="870.40,1030.33 875.61,1030.33 883.66,1053.34 878.56,1053.34" fill="#e41616"/><polygon points="879.58,1030.67 884.57,1030.67 872.10,1053.34 867.11,1053.34" fill="#e41616"/>
</svg>
<span class="t" style="left:882.92px;top:945px;font-size:33px;line-height:40px;color:#7b76fb;font-weight:700;font-style:italic;transform:scaleX(0.9086);">Z</span>
<div class="a" style="left:825px;top:1065px;width:200px;height:28px;border:1px solid #bcd5e0;border-radius:3px;background:rgba(232,232,232,0.75);"></div>
<span class="t" style="left:834.20px;top:1073px;font-size:11px;line-height:13px;color:#8fb0c4;transform:scaleX(0.9780);">boundingBox6</span>
<svg style="left:1009.5px;top:1077.5px" width="15" height="15" viewBox="0 0 15 15"><rect width="15" height="15" fill="#e9e9e9" opacity="0.9"/><path d="M1,15 L15,1 M5.5,15 L15,5.5 M10,15 L15,10" stroke="#b4b4b4" stroke-width="1.2"/></svg>
<div class="a" style="left:1743px;top:1071px;width:146px;height:32px;background:#005a9c;border-radius:3px 3px 0 0;"></div>
<svg style="left:1753px;top:1080px" width="25" height="17" viewBox="0 0 25 17"><ellipse cx="11.6" cy="8" rx="11.6" ry="8" fill="#fff"/><path d="M17,13 L23.5,16.6 L21,11 Z" fill="#fff"/><rect x="5.6" y="4.4" width="12" height="7.6" rx="0.8" fill="#005a9c"/><rect x="13" y="3.2" width="3.4" height="2" fill="#005a9c"/><circle cx="12" cy="8.4" r="2.6" fill="#fff"/><circle cx="12" cy="8.4" r="1.5" fill="#005a9c"/></svg>
<span class="t" style="left:1787.00px;top:1081px;font-size:13.4px;line-height:16px;color:#fff;transform:scaleX(0.9834);">Report an issue</span>
</body></html>
